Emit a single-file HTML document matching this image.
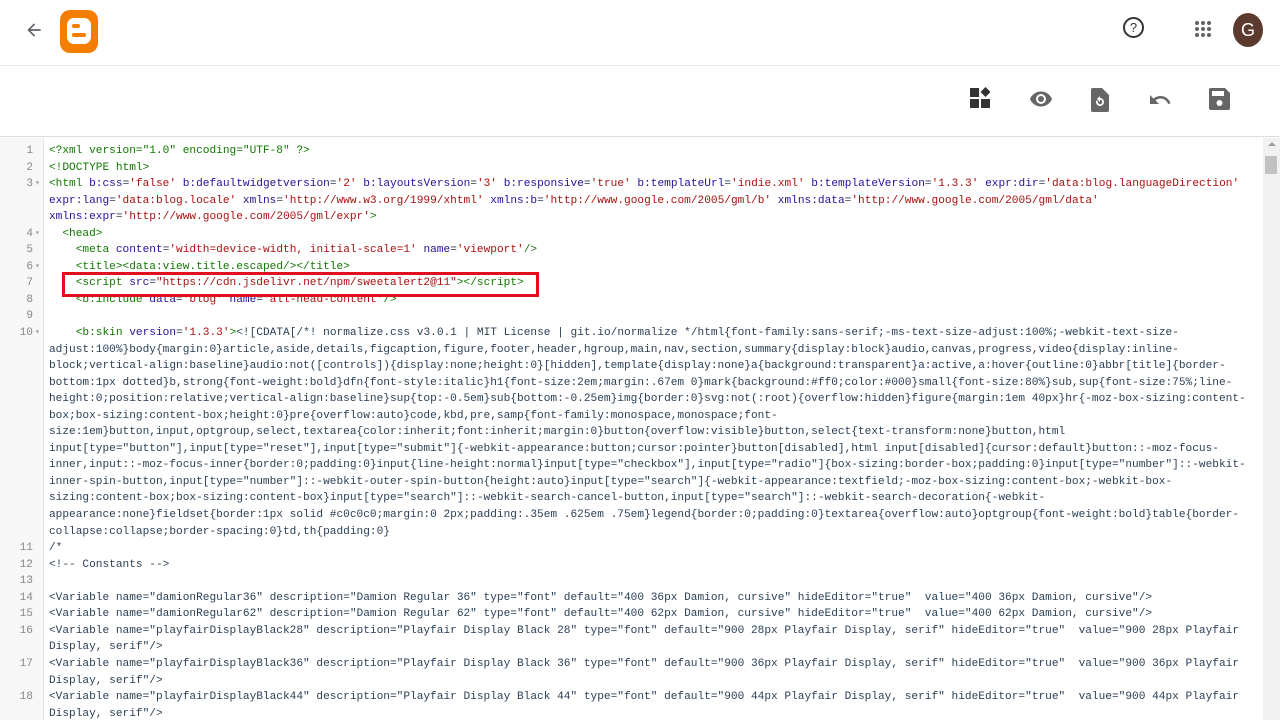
<!DOCTYPE html>
<html><head><meta charset="utf-8"><style>
body{margin:0;width:1280px;height:720px;overflow:hidden;background:#fff;font-family:"Liberation Sans",sans-serif;position:relative}
.hdr{position:absolute;top:0;left:0;width:1280px;height:65px;border-bottom:1px solid #e8e8e8}
.tb{position:absolute;top:66px;left:0;width:1280px;height:70px;border-bottom:1px solid #ddd}
.code{position:absolute;top:138px;left:0;width:1263px;height:582px;overflow:hidden}
.gut{position:absolute;top:0;left:0;width:43px;height:582px;background:#f7f7f7;border-right:1px solid #e4e4e4}
.rows{position:absolute;top:5px;left:0;right:0;font-family:"Liberation Mono",monospace;font-size:11.15px;line-height:16.55px;color:#2b3f55}
.r{position:relative;height:16.55px;white-space:pre;padding-left:49px}
.n{position:absolute;left:0;width:33px;text-align:right;color:#888}
.f{position:absolute;left:35px;color:#999;font-size:8px}
.t{color:#170}.a{color:#219}.v{color:#a11}
.sb{position:absolute;top:138px;right:0;width:17px;height:582px;background:#f1f1f1}
</style></head><body>
<div class="hdr">
<svg style="position:absolute;left:24px;top:20px" width="20" height="20" viewBox="0 0 24 24"><path d="M20 11H7.8l5.6-5.6L12 4l-8 8 8 8 1.4-1.4L7.8 13H20z" fill="#5f6368"/></svg>
<div style="position:absolute;left:60px;top:10px;width:38px;height:43px;background:#f57d00;border-radius:10px"></div>
<div style="position:absolute;left:67px;top:18px;width:24px;height:26px;background:#fff;border-radius:7px"></div>
<div style="position:absolute;left:72px;top:24px;width:8px;height:4px;background:#f57d00;border-radius:2px"></div>
<div style="position:absolute;left:72px;top:33px;width:14px;height:4px;background:#f57d00;border-radius:2px"></div>
<div style="position:absolute;left:1123px;top:17px;width:17px;height:17px;border:2px solid #333;border-radius:50%;font-size:13px;text-align:center;line-height:17px;color:#333">?</div>
<svg style="position:absolute;left:1195px;top:21px" width="16" height="16" viewBox="0 0 16 16" fill="#5f6368"><circle cx="2" cy="2" r="2"/><circle cx="8" cy="2" r="2"/><circle cx="14" cy="2" r="2"/><circle cx="2" cy="8" r="2"/><circle cx="8" cy="8" r="2"/><circle cx="14" cy="8" r="2"/><circle cx="2" cy="14" r="2"/><circle cx="8" cy="14" r="2"/><circle cx="14" cy="14" r="2"/></svg>
<div style="position:absolute;left:1233px;top:13px;width:30px;height:34px;border-radius:50%;background:#5d3a2e;color:#fff;text-align:center;line-height:34px;font-size:18px">G</div>
</div>
<div class="tb">
<svg style="position:absolute;left:970px;top:21px" width="22" height="22" viewBox="0 0 22 22" fill="#333"><rect x="0" y="1" width="9" height="9"/><rect x="0" y="12" width="9" height="9"/><rect x="11" y="12" width="9" height="9"/><path d="M15.5 0l5 5-5 5-5-5z"/></svg>
<svg style="position:absolute;left:1029px;top:21px" width="24" height="24" viewBox="0 0 24 24" fill="#666"><path d="M12 4.5C7 4.5 2.7 7.6 1 12c1.7 4.4 6 7.5 11 7.5s9.3-3.1 11-7.5c-1.7-4.4-6-7.5-11-7.5zM12 17a5 5 0 1 1 0-10 5 5 0 0 1 0 10zm0-8a3 3 0 1 0 0 6 3 3 0 0 0 0-6z"/></svg>
<svg style="position:absolute;left:1091px;top:22px" width="18" height="24" viewBox="0 0 18 24" fill="#666"><path d="M2 0h9l7 7v15a2 2 0 0 1-2 2H2a2 2 0 0 1-2-2V2a2 2 0 0 1 2-2z"/><path d="M9 10a4 4 0 1 1-3.6 2.3l1.6.8A2.2 2.2 0 1 0 9 11.8V14l-3-3 3-3z" fill="#fff"/></svg>
<svg style="position:absolute;left:1148px;top:22px" width="24" height="24" viewBox="0 0 24 24" fill="#666"><path d="M12.5 8c-2.7 0-5.1 1-7 2.6L2 7v9h9l-3.6-3.6c1.4-1.2 3.2-1.9 5.1-1.9 3.5 0 6.5 2.3 7.6 5.5l2.4-.8C21.1 11 17.1 8 12.5 8z"/></svg>
<svg style="position:absolute;left:1209px;top:21px" width="22" height="24" viewBox="0 0 22 24" fill="#666"><path d="M2 1h14l5 5v15a2 2 0 0 1-2 2H2a2 2 0 0 1-2-2V3a2 2 0 0 1 2-2z"/><rect x="3" y="4" width="12" height="5" fill="#fff"/><circle cx="10.5" cy="16" r="3" fill="#fff"/></svg>
</div>
<div class="code"><div class="gut"></div><div class="rows">
<div class="r"><span class="n">1</span><span class="t">&lt;?xml version="1.0" encoding="UTF-8" ?&gt;</span></div>
<div class="r"><span class="n">2</span><span class="t">&lt;!DOCTYPE html&gt;</span></div>
<div class="r"><span class="n">3</span><span class="f">▾</span><span class="t">&lt;html</span> <span class="a">b:css</span>=<span class="v">'false'</span> <span class="a">b:defaultwidgetversion</span>=<span class="v">'2'</span> <span class="a">b:layoutsVersion</span>=<span class="v">'3'</span> <span class="a">b:responsive</span>=<span class="v">'true'</span> <span class="a">b:templateUrl</span>=<span class="v">'indie.xml'</span> <span class="a">b:templateVersion</span>=<span class="v">'1.3.3'</span> <span class="a">expr:dir</span>=<span class="v">'data:blog.languageDirection'</span></div>
<div class="r"><span class="a">expr:lang</span>=<span class="v">'data:blog.locale'</span> <span class="a">xmlns</span>=<span class="v">'http://www.w3.org/1999/xhtml'</span> <span class="a">xmlns:b</span>=<span class="v">'http://www.google.com/2005/gml/b'</span> <span class="a">xmlns:data</span>=<span class="v">'http://www.google.com/2005/gml/data'</span></div>
<div class="r"><span class="a">xmlns:expr</span>=<span class="v">'http://www.google.com/2005/gml/expr'</span><span class="t">&gt;</span></div>
<div class="r"><span class="n">4</span><span class="f">▾</span>  <span class="t">&lt;head&gt;</span></div>
<div class="r"><span class="n">5</span>    <span class="t">&lt;meta</span> <span class="a">content</span>=<span class="v">'width=device-width, initial-scale=1'</span> <span class="a">name</span>=<span class="v">'viewport'</span><span class="t">/&gt;</span></div>
<div class="r"><span class="n">6</span><span class="f">▾</span>    <span class="t">&lt;title&gt;&lt;data:view.title.escaped/&gt;&lt;/title&gt;</span></div>
<div class="r"><span class="n">7</span>    <span class="t">&lt;script</span> <span class="a">src</span>=<span class="v">"https://cdn.jsdelivr.net/npm/sweetalert2@11"</span><span class="t">&gt;&lt;/script&gt;</span></div>
<div class="r"><span class="n">8</span>    <span class="t">&lt;b:include</span> <span class="a">data</span>=<span class="v">'blog'</span> <span class="a">name</span>=<span class="v">'all-head-content'</span><span class="t">/&gt;</span></div>
<div class="r"><span class="n">9</span></div>
<div class="r"><span class="n">10</span><span class="f">▾</span>    <span class="t">&lt;b:skin</span> <span class="a">version</span>=<span class="v">'1.3.3'</span><span class="t">&gt;</span>&lt;![CDATA[/*! normalize.css v3.0.1 | MIT License | git.io/normalize */html{font-family:sans-serif;-ms-text-size-adjust:100%;-webkit-text-size-</div>
<div class="r">adjust:100%}body{margin:0}article,aside,details,figcaption,figure,footer,header,hgroup,main,nav,section,summary{display:block}audio,canvas,progress,video{display:inline-</div>
<div class="r">block;vertical-align:baseline}audio:not([controls]){display:none;height:0}[hidden],template{display:none}a{background:transparent}a:active,a:hover{outline:0}abbr[title]{border-</div>
<div class="r">bottom:1px dotted}b,strong{font-weight:bold}dfn{font-style:italic}h1{font-size:2em;margin:.67em 0}mark{background:#ff0;color:#000}small{font-size:80%}sub,sup{font-size:75%;line-</div>
<div class="r">height:0;position:relative;vertical-align:baseline}sup{top:-0.5em}sub{bottom:-0.25em}img{border:0}svg:not(:root){overflow:hidden}figure{margin:1em 40px}hr{-moz-box-sizing:content-</div>
<div class="r">box;box-sizing:content-box;height:0}pre{overflow:auto}code,kbd,pre,samp{font-family:monospace,monospace;font-</div>
<div class="r">size:1em}button,input,optgroup,select,textarea{color:inherit;font:inherit;margin:0}button{overflow:visible}button,select{text-transform:none}button,html</div>
<div class="r">input[type="button"],input[type="reset"],input[type="submit"]{-webkit-appearance:button;cursor:pointer}button[disabled],html input[disabled]{cursor:default}button::-moz-focus-</div>
<div class="r">inner,input::-moz-focus-inner{border:0;padding:0}input{line-height:normal}input[type="checkbox"],input[type="radio"]{box-sizing:border-box;padding:0}input[type="number"]::-webkit-</div>
<div class="r">inner-spin-button,input[type="number"]::-webkit-outer-spin-button{height:auto}input[type="search"]{-webkit-appearance:textfield;-moz-box-sizing:content-box;-webkit-box-</div>
<div class="r">sizing:content-box;box-sizing:content-box}input[type="search"]::-webkit-search-cancel-button,input[type="search"]::-webkit-search-decoration{-webkit-</div>
<div class="r">appearance:none}fieldset{border:1px solid #c0c0c0;margin:0 2px;padding:.35em .625em .75em}legend{border:0;padding:0}textarea{overflow:auto}optgroup{font-weight:bold}table{border-</div>
<div class="r">collapse:collapse;border-spacing:0}td,th{padding:0}</div>
<div class="r"><span class="n">11</span>/*</div>
<div class="r"><span class="n">12</span>&lt;!-- Constants --&gt;</div>
<div class="r"><span class="n">13</span></div>
<div class="r"><span class="n">14</span>&lt;Variable name="damionRegular36" description="Damion Regular 36" type="font" default="400 36px Damion, cursive" hideEditor="true"  value="400 36px Damion, cursive"/&gt;</div>
<div class="r"><span class="n">15</span>&lt;Variable name="damionRegular62" description="Damion Regular 62" type="font" default="400 62px Damion, cursive" hideEditor="true"  value="400 62px Damion, cursive"/&gt;</div>
<div class="r"><span class="n">16</span>&lt;Variable name="playfairDisplayBlack28" description="Playfair Display Black 28" type="font" default="900 28px Playfair Display, serif" hideEditor="true"  value="900 28px Playfair</div>
<div class="r">Display, serif"/&gt;</div>
<div class="r"><span class="n">17</span>&lt;Variable name="playfairDisplayBlack36" description="Playfair Display Black 36" type="font" default="900 36px Playfair Display, serif" hideEditor="true"  value="900 36px Playfair</div>
<div class="r">Display, serif"/&gt;</div>
<div class="r"><span class="n">18</span>&lt;Variable name="playfairDisplayBlack44" description="Playfair Display Black 44" type="font" default="900 44px Playfair Display, serif" hideEditor="true"  value="900 44px Playfair</div>
<div class="r">Display, serif"/&gt;</div>
</div></div>
<div style="position:absolute;left:62px;top:272px;width:471px;height:19px;border:3px solid #e0101e"></div>
<div class="sb"><div style="position:absolute;top:4px;left:5px;width:0;height:0;border:4px solid transparent;border-bottom-color:#a0a0a0;border-top:0"></div><div style="position:absolute;top:18px;left:2px;width:12px;height:18px;background:#c1c1c1"></div></div>
</body></html>
